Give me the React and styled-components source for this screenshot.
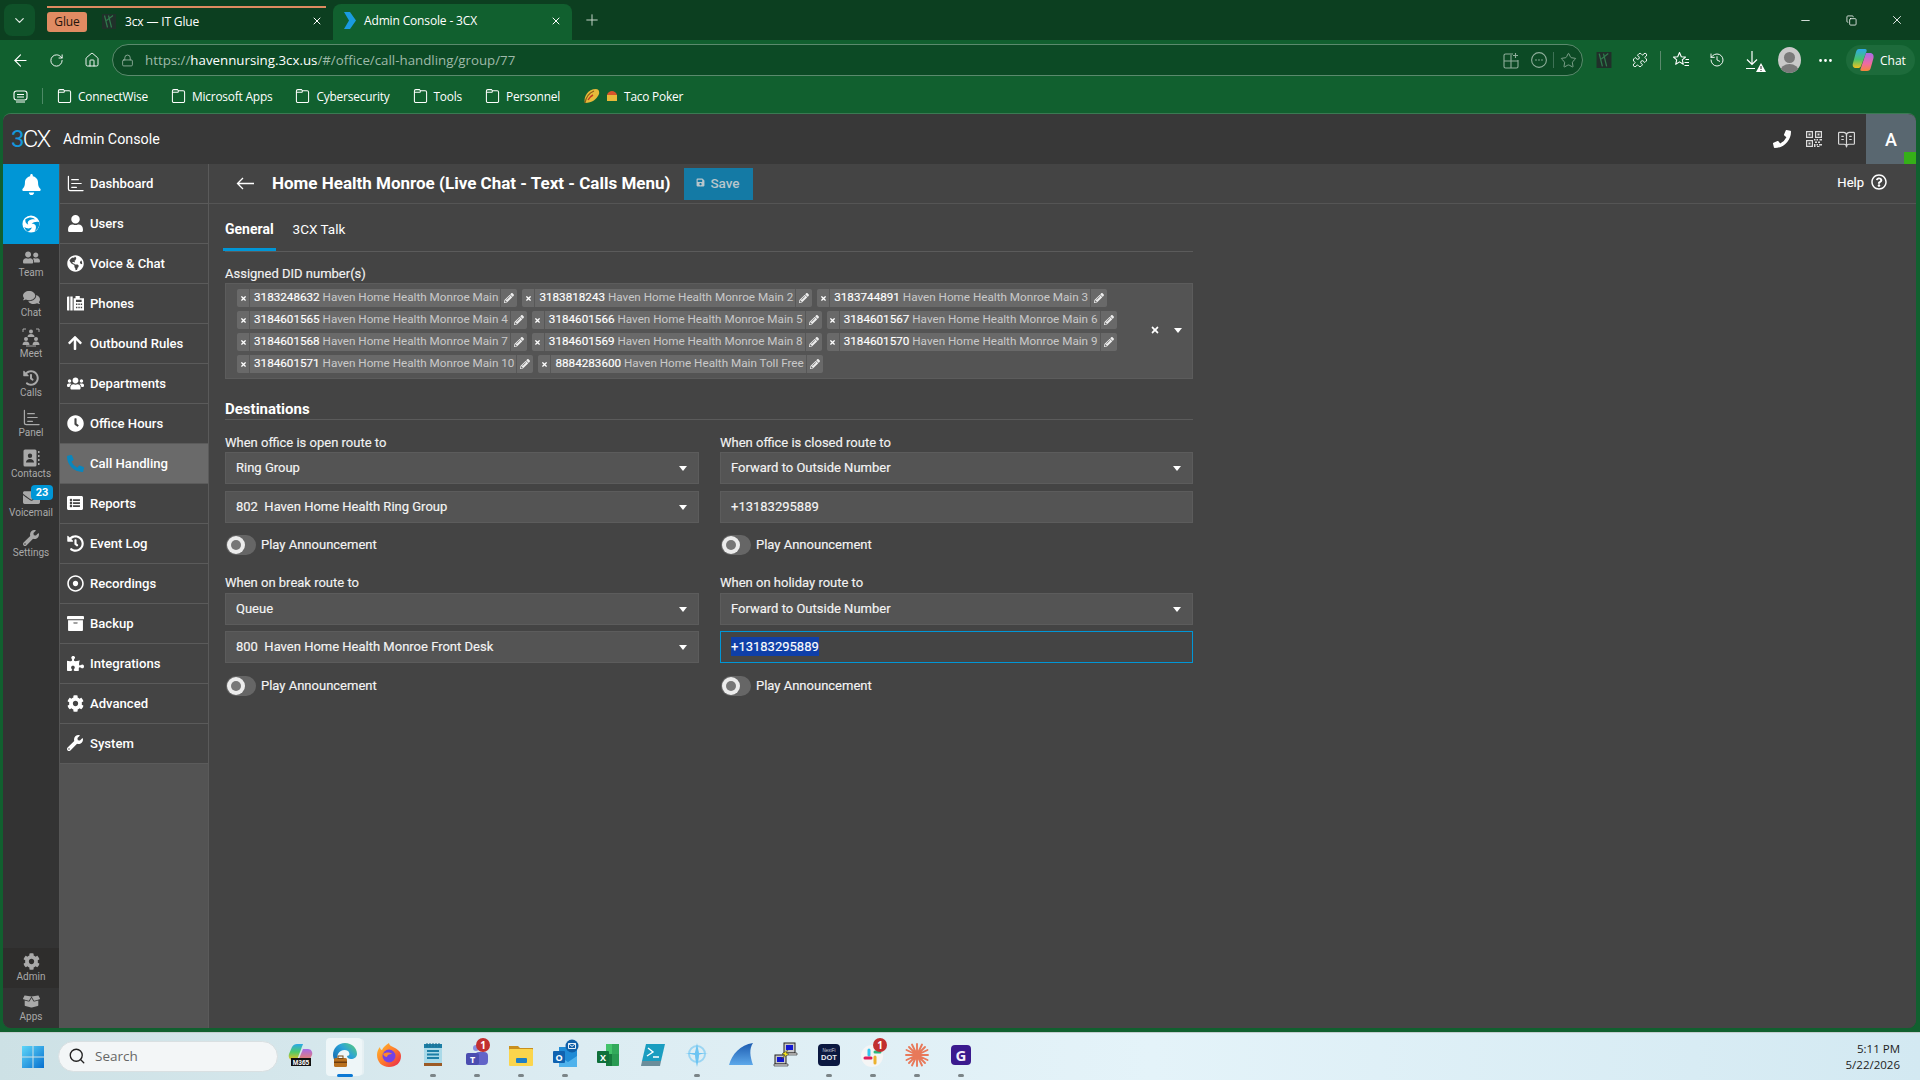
import React from "react";
import styled, { createGlobalStyle } from "styled-components";
import { RotateCw, House, Lock, Star, Puzzle, History, Ellipsis, Minus, X, Plus, ChevronDown, Search, Copy, BookOpenText, ArrowLeft } from "lucide-react";
import { FaUser, FaGlobeAmericas, FaArrowUp, FaUsers, FaClock, FaPhoneAlt, FaListAlt, FaHistory, FaRegDotCircle, FaArchive, FaPuzzlePiece, FaCog, FaWrench, FaUserFriends, FaComments, FaEnvelope, FaBoxOpen, FaBell, FaPencilAlt, FaTimes, FaSave, FaRegQuestionCircle } from "react-icons/fa";

const Global = createGlobalStyle`
  html, body { margin: 0; padding: 0; height: 100%; overflow: hidden; background: #11602f; }
  * { box-sizing: border-box; }
  #root { height: 100%; }
`;

const Page = styled.div`
  width: 1920px; height: 1080px; display: flex; flex-direction: column; overflow: hidden;
  background: #11602f; font-family: Roboto, "Liberation Sans", sans-serif;
`;

/* ---------- browser chrome ---------- */
const TabStrip = styled.div`
  height: 40px; flex: none; display: flex; background: #0c3f20; color: #fff;
  font-family: "Open Sans", "Noto Sans", sans-serif; font-size: 12px;
`;
const TabListButton = styled.div`
  width: 31px; height: 32px; margin: 4px 0 0 4px; border-radius: 8px; background: #0f5229;
  display: flex; align-items: center; justify-content: center; color: #dfe9e2;
`;
const InactiveTab = styled.div`
  width: 279px; height: 28px; margin: 6px 0 0 12px; border-top: 2px solid #dd8a60;
  display: flex; align-items: center; letter-spacing: -0.1px;
`;
const GroupLabel = styled.span`
  width: 40px; height: 20px; margin-top: 2px; border-radius: 3px; background: #e08b62; color: #23150c;
  display: flex; align-items: center; justify-content: center; font-size: 12px; flex: none; padding-bottom: 1px;
`;
const TabFavicon = styled.svg`
  width: 14px; height: 15px; margin-left: 15px; flex: none;
`;
const TabTitle = styled.span`
  margin-left: ${p => p.$gap}px; flex: 1; white-space: nowrap; letter-spacing: -0.15px;
`;
const TabClose = styled.span`
  display: flex; width: 12px; margin-right: ${p => p.$right}px; flex: none; color: #fff;
`;
const ActiveTab = styled.div`
  width: 239px; height: 36px; margin: 4px 0 0 7px; padding: 0 0 3px 11px; border-radius: 8px 8px 0 0;
  background: #11602f; display: flex; align-items: center;
`;
const NewTab = styled.div`
  width: 18px; margin-left: 11px; display: flex; align-items: center; justify-content: center; color: #c8d8cd;
`;
const WindowControls = styled.div`
  margin-left: auto; display: flex;
`;
const WindowControl = styled.div`
  width: 46px; height: 40px; display: flex; align-items: center; justify-content: center; color: #fff;
`;

const Toolbar = styled.div`
  height: 40px; flex: none; display: flex; align-items: center; padding-left: 2px; background: #11602f; color: #fff;
`;
const ToolButton = styled.div`
  width: 36px; height: 32px; flex: none; display: flex; align-items: center; justify-content: center;
  color: ${p => p.$dim ? "#c4d6ca" : "#fff"}; position: relative;
`;
const AddressBar = styled.div`
  flex: 1; height: 32px; margin: 0 3px 0 2px; display: flex; align-items: center; padding-left: 8px;
  border: 1px solid #5b8a6d; border-radius: 16px; background: #0c4a25;
  font-family: "Open Sans", "Noto Sans", sans-serif; font-size: 13.3px; color: #9fb9a9;
`;
const AddressIcon = styled.span`
  display: flex; width: 14px; margin-right: 10px; color: #9fb9a9;
`;
const Domain = styled.span`
  color: #fff;
`;
const AddressTools = styled.div`
  margin-left: auto; display: flex; align-items: center; color: #8fae9b;
`;
const AddressTool = styled.div`
  width: 28px; display: flex; align-items: center; justify-content: center;
`;
const ThinSep = styled.div`
  width: 1px; height: ${p => p.$h}px; margin: 0 ${p => p.$m}px; background: ${p => p.$c}; flex: none;
`;
const ToolGroup = styled.div`
  flex: none; display: flex; align-items: center; padding-right: 5px;
`;
const Avatar = styled.div`
  width: 23px; height: 26px; border-radius: 50%; background: #c9c9c9; overflow: hidden; position: relative;
  &::before { content: ""; position: absolute; left: 6px; top: 5px; width: 11px; height: 11px; border-radius: 50%; background: #7a7a7a; }
  &::after { content: ""; position: absolute; left: 2px; top: 17px; width: 19px; height: 16px; border-radius: 50%; background: #7a7a7a; }
`;
const ChatPill = styled.div`
  width: 69px; height: 30px; margin-left: 3px; border-radius: 15px; background: #1d6b3b; display: flex; align-items: center;
  padding-left: 6px; gap: 6px; font-family: "Open Sans", sans-serif; font-size: 12px; color: #fff;
`;
const Warn = styled.svg`
  position: absolute; right: 5px; bottom: 4px;
`;

const BookmarksBar = styled.div`
  height: 33px; flex: none; display: flex; align-items: center; padding-left: 13px; background: #11602f; color: #fff;
  font-family: "Open Sans", "Noto Sans", sans-serif; font-size: 11.9px; letter-spacing: -0.2px; padding-bottom: 1px;
`;
const Bookmark = styled.div`
  display: flex; align-items: center; gap: 6px; margin-right: 23px; white-space: nowrap;
`;

/* ---------- admin console window ---------- */
const AppWindow = styled.div`
  flex: 1; min-height: 0; margin: 0 4px 4px 3px; display: flex; flex-direction: column;
  border-radius: 8px; overflow: hidden; background: #444; border-top: 1px solid #3a7a52;
`;
const TopBar = styled.div`
  height: 50px; flex: none; display: flex; align-items: center; background: #383838; color: #fff; padding-left: 8px;
`;
const LogoMark = styled.div`
  font-size: 24px; font-weight: 300; letter-spacing: -1.8px; line-height: 1; width: 52px; color: #fff;
  span { color: #1497dc; font-weight: 400; }
`;
const AppName = styled.div`
  font-size: 14.3px;
`;
const TopIcons = styled.div`
  margin-left: auto; display: flex; align-items: center; height: 100%;
`;
const TopIcon = styled.div`
  width: 32px; display: flex; justify-content: center; color: ${p => p.$c || "#d8d8d8"};
`;
const UserBlock = styled.div`
  width: 50px; height: 100%; margin-left: 4px; background: #596770; color: #fff; font-size: 18px; font-weight: 500;
  display: flex; align-items: center; justify-content: center; position: relative;
`;
const Presence = styled.div`
  position: absolute; right: 0; bottom: 0; width: 12px; height: 12px; background: #35b018;
`;
const Body = styled.div`
  flex: 1; min-height: 0; display: flex;
`;
const Rail = styled.div`
  width: 57px; flex: none; display: flex; flex-direction: column; background: #333; border-right: 1px solid #555;
`;
const RailHot = styled.div`
  height: 80px; background: #0096d6; display: flex; flex-direction: column; color: #fff;
`;
const RailHotItem = styled.div`
  height: 40px; display: flex; align-items: center; justify-content: center;
`;
const RailItem = styled.div`
  height: 40px; flex: none; position: relative; display: flex; flex-direction: column; align-items: center; justify-content: center;
  color: #a9a9a9; font-size: 10px; line-height: 12px; gap: 1px; background: ${p => p.$active ? "#2e2d2c" : "transparent"};
  svg { display: block; }
`;
const RailBadge = styled.div`
  position: absolute; left: 28px; top: 1px; width: 22px; height: 15px; border-radius: 4px; background: #0096d6; color: #fff;
  font-size: 11px; font-weight: 700; display: flex; align-items: center; justify-content: center;
`;
const RailSpacer = styled.div`
  flex: 1;
`;
const NavColumn = styled.div`
  width: 149px; flex: none; background: #535353; border-right: 1px solid #5a5a5a;
`;
const NavRow = styled.div`
  height: 40px; display: flex; align-items: center; padding: 0 0 1px 7px; background: ${p => p.$active ? "#6a6a6a" : "#444"};
  border-bottom: 1px solid #5b5b5b; color: #fff; font-size: 13.1px; font-weight: 500; white-space: nowrap;
`;
const NavIcon = styled.span`
  width: 23px; flex: none; display: flex; color: ${p => p.$c || "#fff"};
`;
const Main = styled.div`
  flex: 1; min-width: 0; color: #fff; background: #444;
`;
const TitleRow = styled.div`
  height: 40px; display: flex; align-items: center; padding: 0 29px 0 27px; border-bottom: 1px solid #555;
`;
const BackArrow = styled.div`
  display: flex; width: 36px; color: #fff;
`;
const Title = styled.h1`
  margin: 0; font-size: 17px; font-weight: 700; white-space: nowrap; padding-bottom: 1px;
`;
const SaveButton = styled.div`
  width: 69px; height: 32px; margin-left: 13px; background: #147aa5; color: #b9c6cc; display: flex; align-items: center;
  justify-content: center; gap: 5px; font-size: 13.5px; font-weight: 500; padding-bottom: 2px;
`;
const Help = styled.div`
  margin-left: auto; display: flex; align-items: center; gap: 7px; font-size: 13px; font-weight: 400; -webkit-text-stroke: .15px #fff; padding-bottom: 3px;
`;
const Form = styled.div`
  width: 968px; margin: 14px 0 0 16px;
`;
const Tabs = styled.div`
  height: 34px; display: flex; border-bottom: 1px solid #5b5b5b;
`;
const FormTab = styled.div`
  height: 33px; padding: 0 ${p => p.$active ? "2px" : "0"}; margin-left: ${p => p.$active ? "-2px" : "17px"}; line-height: 22px;
  font-size: ${p => p.$active ? 14 : 13.5}px; font-weight: ${p => p.$active ? 700 : 400};
  border-bottom: 3px solid ${p => p.$active ? "#0096d6" : "transparent"};
`;
const FieldLabel = styled.div`
  height: 16px; line-height: 18px; font-size: 13px; -webkit-text-stroke: .15px #f2f2f2; margin-bottom: ${p => p.$mb ?? 2}px; white-space: nowrap; color: #f2f2f2;
`;
const DidLabel = styled(FieldLabel)`
  margin-top: 13px;
`;
const DidBox = styled.div`
  height: 96px; padding: 5px 0 5px 11px; background: #545454; border: 1px solid #5c5c5c; display: flex; align-items: flex-start;
`;
const ChipList = styled.div`
  width: 908px; display: flex; flex-wrap: wrap; gap: 4px 5px;
`;
const Chip = styled.div`
  height: 18px; display: flex; align-items: center; background: #696969; font-size: 11.7px; line-height: 16px; color: #c9c9c9; white-space: nowrap; border-radius: 2px;
`;
const ChipRemove = styled.span`
  width: 13px; height: 100%; display: flex; align-items: center; justify-content: center; border-right: 1px solid #585858; color: #fff;
`;
const ChipText = styled.span`
  padding: 0 2px 2px 4px;
  b { font-weight: 400; color: #fff; -webkit-text-stroke: .15px #fff; }
`;
const ChipEdit = styled.span`
  width: 17px; height: 100%; display: flex; align-items: center; justify-content: center; border-left: 1px solid #585858; color: #eee;
`;
const DidActions = styled.div`
  flex: 1; align-self: center; display: flex; align-items: center; gap: 14px; padding: 0 0 2px 5px; color: #fff;
`;
const Caret = styled.span`
  width: 0; height: 0; border-left: 4.5px solid transparent; border-right: 4.5px solid transparent; border-top: 5.5px solid #fff; flex: none;
`;
const SectionTitle = styled.div`
  margin-top: 22px; height: 19px; padding-bottom: 3px; line-height: 16px; font-size: 15px; font-weight: 700; border-bottom: 1px solid #5b5b5b;
`;
const RouteGrid = styled.div`
  margin-top: 14px; display: grid; grid-template-columns: 474px 473px; column-gap: 21px; row-gap: 19px;
`;
const RouteGroup = styled.div`
  display: flex; flex-direction: column;
`;
const FieldStack = styled.div`
  display: flex; flex-direction: column; gap: ${p => p.$gap}px;
`;
const Select = styled.div`
  height: 32px; padding: 0 11px 0 10px; display: flex; align-items: center; justify-content: space-between;
  background: #545454; border: 1px solid #5c5c5c; font-size: 13px; -webkit-text-stroke: .15px #f4f4f4; color: #f4f4f4; white-space: pre;
  span:first-child { padding-bottom: 2px; }
`;
const TextInput = styled.div`
  height: 32px; padding: 0 10px 1px; display: flex; align-items: center; font-size: 13px; -webkit-text-stroke: .15px #f4f4f4; color: #f4f4f4;
  background: ${p => p.$focus ? "#444" : "#545454"}; border: 1px solid ${p => p.$focus ? "#0096d6" : "#5c5c5c"};
`;
const Selected = styled.span`
  background: #0f3fa8; color: #fff; line-height: 19px;
`;
const ToggleRow = styled.div`
  margin-top: ${p => p.$mt}px; height: 20px; display: flex; align-items: center; font-size: 13px; -webkit-text-stroke: .15px #f4f4f4; gap: 5px; color: #f4f4f4;
  span { padding-bottom: 1px; }
`;
const Toggle = styled.div`
  width: 30px; height: 20px; border-radius: 10px; background: #666; position: relative; margin-left: 1px;
  &::before { content: ""; position: absolute; left: 1px; top: 1px; width: 18px; height: 18px; border-radius: 50%; background: #ececec; }
  &::after { content: ""; position: absolute; left: 5px; top: 5px; width: 10px; height: 10px; border-radius: 50%; background: #777; }
`;

/* ---------- windows taskbar ---------- */
const Taskbar = styled.div`
  height: 48px; flex: none; display: flex; align-items: center; border-top: 1px solid #c4cdd0;
  background: linear-gradient(90deg, #cde1e5 0%, #dcecf2 30%, #e4f3f9 60%, #d3e9f2 100%);
`;
const StartSlot = styled.div`
  width: 58px; flex: none; padding-left: 21px; display: flex;
`;
const SearchPill = styled.div`
  width: 220px; height: 31px; flex: none; margin-right: 1px; border-radius: 16px; background: #f3f6f7; border: 1px solid #d9e0e2; display: flex; align-items: center;
  padding: 0 0 1px 9px; gap: 9px; color: #666; font-family: "Open Sans", sans-serif; font-size: 13.5px;
`;
const TaskSlot = styled.div`
  width: 44px; height: 47px; flex: none; display: flex; align-items: center; justify-content: center; position: relative;
`;
const ActiveBack = styled.div`
  position: absolute; left: 3px; top: 5px; width: 36px; height: 38px; border-radius: 4px; background: #eef6f8; box-shadow: 3px 0 0 -1px #e6f0f3;
`;
const RunDot = styled.div`
  position: absolute; left: 19px; bottom: 3px; width: 6px; height: 3px; border-radius: 2px; background: ${p => p.$active ? "#0a78d4" : "#7b8487"};
  ${p => p.$active && "width: 16px; left: 14px;"}
`;
const TaskGlyph = styled.svg`
  width: 26px; height: 26px; position: relative; display: block; overflow: visible; margin-top: -3px;
`;
const Clock = styled.div`
  margin-left: auto; padding-right: 20px; text-align: right; font-family: "Open Sans", sans-serif; font-size: 11.5px; line-height: 16px; color: #222;
`;

/* ---------- custom drawings ---------- */
const PanelGlyph = ({ size = 17, c = "currentColor" }) => (
  <svg width={size} height={size} viewBox="0 0 18 18" fill="none" stroke={c} strokeWidth="1.3" strokeLinecap="round">
    <path d="M1.5 1.5V14.5a2 2 0 0 0 2 2H17" /><path d="M5 5h7M5 9h10M5 13h5" />
  </svg>
);
const PhonesGlyph = () => (
  <svg width="17" height="17" viewBox="0 0 18 18" fill="#fff">
    <path d="M0 2.5a1 1 0 0 1 1-1h1.5v15H1a1 1 0 0 1-1-1zM3.5 1.5H6v15H3.5z" />
    <path fillRule="evenodd" d="M7 3.5h2V1h4.5v2.5H18V16.5H7zM9.5 7.5H15.5V5H9.5zM9.5 10.5H11V9H9.5zM12 10.5h1.5V9H12zM14.5 10.5H16V9h-1.5zM9.5 14H11v-1.5H9.5zM12 14h1.5v-1.5H12zM14.5 14H16v-1.5h-1.5z" />
  </svg>
);
const SwirlGlyph = () => (
  <svg width="18" height="18" viewBox="0 0 20 20">
    <circle cx="10" cy="10" r="9.5" fill="#fff" />
    <path d="M4 4.500c4-2.500 8-2.500 11 .5-3-.5-6 0-8 2-.8 1-.8 2.500 0 3.500-2.500-.5-4-3.500-3-6zM19 8c1 3.500-1 8-5 10 1.500-2 2-4.500 1-6.500-1-1.500-3-2-4.500-1.500 2-2 6-3 8.500-2zM2.500 13c2 2 5.500 2.500 8.500 1-1 2.500-3 4.500-5 4.500-1.500-1.500-3-3.500-3.500-5.500z" fill="#0096d6" />
  </svg>
);
const MeetGlyph = () => (
  <svg width="18" height="19" viewBox="0 0 18 19" fill="#a9a9a9">
    <path d="M4 1H1v3M14 1h3v3" fill="none" stroke="#a9a9a9" strokeWidth="1" />
    <circle cx="9" cy="3.5" r="2" /><path d="M5.500 9c0-2 1.500-3 3.500-3s3.500 1 3.500 3z" />
    <circle cx="4" cy="11" r="2" /><path d="M.5 17c0-2.500 1.500-3.500 3.500-3.500S7.500 14.500 7.500 17z" />
    <circle cx="14" cy="11" r="2" /><path d="M10.500 17c0-2.500 1.500-3.500 3.500-3.500s3.500 1 3.500 3.500z" />
    <path d="M4 18h10" stroke="#a9a9a9" strokeWidth="1" />
  </svg>
);
const ContactsGlyph = () => (
  <svg width="17" height="18" viewBox="0 0 17 18" fill="#a9a9a9">
    <path fillRule="evenodd" d="M2 0.500h10a1.500 1.500 0 0 1 1.500 1.500v14a1.500 1.500 0 0 1-1.500 1.500H2A1.500 1.500 0 0 1 .5 16V2A1.500 1.500 0 0 1 2 .5zM7 4.500a2.200 2.200 0 1 0 0 4.400 2.200 2.200 0 0 0 0-4.400zM3 13.500h8c0-2.200-1.700-3.500-4-3.500s-4 1.300-4 3.500z" />
    <path d="M15 2h1.500v2H15zM15 6h1.500v2H15zM15 10h1.500v2H15zM15 14h1.500v2H15z" />
  </svg>
);
const QrGlyph = () => (
  <svg width="16" height="16" viewBox="0 0 16 16" fill="#ddd">
    <path fillRule="evenodd" d="M0 0h7v7H0zM1.200 1.200v4.600h4.600V1.200zM9 0h7v7H9zM10.200 1.200v4.600h4.600V1.200zM0 9h7v7H0zM1.200 10.200v4.600h4.600v-4.600z" />
    <path d="M2.500 2.500h2v2h-2zM11.500 2.500h2v2h-2zM2.500 11.500h2v2h-2zM8 8h1.500v1.500H8zM10.500 8H12v1.500h-1.500zM13.500 8H16v1.500h-2.500zM9 10.500h2V12H9zM12 10.500h2V12h-2zM8 13h1.500v3H8zM10.500 13H12v1.500h-1.500zM13 13h3v1.500h-3zM11 15h2.500v1H11z" />
  </svg>
);
const BackGlyph = () => (
  <svg width="18" height="13" viewBox="0 0 18 13" fill="none" stroke="#fff" strokeWidth="1.300"><path d="M18 6.500H1.500M7 1L1.500 6.500 7 12" /></svg>
);
const Folder = () => (
  <svg width="15" height="16" viewBox="0 0 16 17" fill="none" stroke="#fff" strokeWidth="1.100">
    <path d="M1.500 4V14a1.500 1.500 0 0 0 1.500 1.500h10a1.500 1.500 0 0 0 1.500-1.500V4.500A1.500 1.500 0 0 0 13 3H8L6.800 1.700H3A1.500 1.500 0 0 0 1.500 3.200zM1.500 4.500H7.500L8 3" />
  </svg>
);
const TacoGlyph = () => (
  <svg width="17" height="17" viewBox="0 0 17 17">
    <path d="M2 15C0 9 5 1 13 1c3 0 3.500 3 3 5-2 5-7 9-14 9z" fill="#e8b93a" />
    <path d="M2 15c1-6 4-10 9-12" stroke="#8a5b16" fill="none" strokeWidth="1.2" />
    <path d="M5 12c1-2 3-4 5-5" stroke="#c23b22" fill="none" strokeWidth="1.400" />
  </svg>
);
const SmallFood = () => (
  <svg width="12" height="12" viewBox="0 0 12 12">
    <path d="M1 5h10v6H1z" fill="#e8b93a" /><path d="M1 5c1-3 3-4 5-4s4 1 5 4z" fill="#d9542b" />
  </svg>
);
const ChatGlyph = () => (
  <svg width="22" height="24" viewBox="0 0 22 24">
    <defs>
      <linearGradient id="cp1" x1=".5" y1="0" x2=".5" y2="1"><stop offset="0" stopColor="#2fa8e8" /><stop offset=".55" stopColor="#46c46c" /><stop offset="1" stopColor="#f2c01f" /></linearGradient>
      <linearGradient id="cp2" x1=".5" y1="0" x2=".5" y2="1"><stop offset="0" stopColor="#a86ce8" /><stop offset=".6" stopColor="#f06aa0" /><stop offset="1" stopColor="#f5873a" /></linearGradient>
    </defs>
    <path d="M7 1h6c1.500 0 2 1 1.500 2.500L9 18c-.6 1.400-1.500 2-3 2H4c-2.500 0-4-2-3-5L4 4c.6-2 1.500-3 3-3z" fill="url(#cp1)" />
    <path d="M14 5h4c3 0 4 2.500 3.500 5l-2.500 9c-.6 3-2 4-4 4h-5c-1.500 0-2-1-1.500-2z" fill="url(#cp2)" />
  </svg>
);
const FavoritesGlyph = () => (
  <svg width="18" height="18" viewBox="0 0 18 18" fill="none" stroke="#fff" strokeWidth="1.100" strokeLinejoin="round">
    <path d="M7.500 1.500l1.800 4.200 4.200.4-3.200 2.800 1 4.400-3.800-2.400-3.800 2.400 1-4.400L1.500 6.100l4.200-.4z" />
    <path d="M13.500 8.500h3.500M12.500 11.500h4.500M12.500 14.500h4.500" />
  </svg>
);
const DownloadGlyph = () => (
  <>
    <svg width="18" height="20" viewBox="0 0 18 20" fill="none" stroke="#fff" strokeWidth="1.200"><path d="M8 1v13M3 9.500l5 5 5-5M2 18.500h9" /></svg>
    <Warn width="10" height="9" viewBox="0 0 10 9"><path d="M5 0l5 9H0z" fill="#fff" /><path d="M5 3v3M5 7v1" stroke="#222" /></Warn>
  </>
);
const SplitGlyph = () => (
  <svg width="16" height="17" viewBox="0 0 16 17" fill="none" stroke="#8fae9b" strokeWidth="1.100"><path d="M10 2H2.500A1.500 1.500 0 0 0 1 3.500v11A1.500 1.500 0 0 0 2.500 16h11a1.500 1.500 0 0 0 1.500-1.500V8M1 9h14M8 3v13M12.500 1v5M10 3.500h5" /></svg>
);
const DotsCircle = () => (
  <svg width="16" height="16" viewBox="0 0 16 16" fill="none" stroke="#8fae9b" strokeWidth="1.100"><circle cx="8" cy="8" r="7.400" /><path d="M5 8h.01M8 8h.01M11 8h.01" strokeWidth="1.600" strokeLinecap="round" /></svg>
);
const GlueLogo = () => (
  <>
    <rect width="14" height="15" fill="#20302a" />
    <path d="M2.500 1.500l3 12M6.500 1.500l3 12M11 1.500l-6.500 5" stroke="#2f7a4c" strokeWidth="1.200" fill="none" />
  </>
);
const WinLogo = () => (
  <svg width="24" height="24" viewBox="0 0 24 24">
    <defs><linearGradient id="win" x1="0" y1="0" x2="1" y2="1"><stop offset="0" stopColor="#5fd6f8" /><stop offset="1" stopColor="#0670d0" /></linearGradient></defs>
    <path d="M1 1h10.500v10.500H1zM12.500 1H23v10.500H12.500zM1 12.500h10.500V23H1zM12.500 12.500H23V23H12.500z" fill="url(#win)" />
  </svg>
);
const Badge = ({ x = 18, y = 4 }) => (
  <g>
    <circle cx={x} cy={y} r="7" fill="#c22f2f" />
    <text x={x} y={y + 3.500} textAnchor="middle" fontSize="10" fontWeight="700" fontFamily="Open Sans, sans-serif" fill="#fff">1</text>
  </g>
);

const TaskIcons = {
  m365: () => (
    <TaskGlyph viewBox="0 0 26 26">
      <defs><linearGradient id="m1" x1=".5" y1="0" x2=".5" y2="1"><stop offset="0" stopColor="#29a8e8" /><stop offset=".5" stopColor="#4fca6a" /><stop offset="1" stopColor="#f1c21c" /></linearGradient>
      <linearGradient id="m2" x1=".5" y1="0" x2=".5" y2="1"><stop offset="0" stopColor="#a86be8" /><stop offset="1" stopColor="#f2825d" /></linearGradient></defs>
      <path d="M9 2h6L9 18H5c-3 0-5-2-4-6l3-7c1-2 3-3 5-3z" fill="url(#m1)" /><path d="M15 7h5c3 0 5 3 4 6l-3 6H10z" fill="url(#m2)" />
      <rect x="3" y="16" width="20" height="8" fill="#111" />
      <text x="13" y="22.500" textAnchor="middle" fontSize="6.600" fontWeight="700" fontFamily="Liberation Sans, sans-serif" fill="#fff">M365</text>
    </TaskGlyph>
  ),
  edge: () => (
    <TaskGlyph viewBox="0 0 26 26">
      <defs><linearGradient id="e1" x1="0" y1="1" x2="1" y2="0"><stop offset="0" stopColor="#0c59a4" /><stop offset=".6" stopColor="#2ba3d8" /><stop offset="1" stopColor="#5fd16e" /></linearGradient></defs>
      <path d="M13 1c7 0 12 5 12 11 0 3-3 5-6 5-2 0-4-1-4-3 3 0 3-3 1-5-3-2-8-1-10 3-2 5 0 10 5 12C5 23 1 18 1 13 1 6 6 1 13 1z" fill="url(#e1)" />
      <rect x="2" y="16" width="13" height="9" rx="1.500" fill="#b8701f" /><rect x="2" y="19.500" width="13" height="1.500" fill="#6d3d0f" /><rect x="6" y="14" width="5" height="2.500" fill="none" stroke="#7a4a15" />
    </TaskGlyph>
  ),
  firefox: () => (
    <TaskGlyph viewBox="0 0 26 26">
      <defs><linearGradient id="f1" x1="0" y1="0" x2="1" y2="1"><stop offset="0" stopColor="#ffc02e" /><stop offset=".5" stopColor="#ff7b2b" /><stop offset="1" stopColor="#e8204f" /></linearGradient></defs>
      <path d="M13 25C6 25 1 20 1 13c0-3 1-6 3-8 0 2 1 3 2 3 1-3 4-5 7-7 0 2 2 3 4 4 4 2 8 4 8 9 0 7-5 11-12 11z" fill="url(#f1)" />
      <circle cx="13" cy="14" r="6.500" fill="#7542e5" /><path d="M7 12c3-2 7-2 9 0-3 0-5 1-5 3-2 0-3-1-4-3z" fill="#ff8a2b" />
    </TaskGlyph>
  ),
  notepad: () => (
    <TaskGlyph viewBox="0 0 26 26">
      <rect x="4" y="2" width="18" height="19" fill="#a9d9e8" /><rect x="4" y="2" width="18" height="4" fill="#1d7fa6" />
      <path d="M7 1v4M10 1v4M13 1v4M16 1v4M19 1v4" stroke="#1a6e90" strokeWidth="1" />
      <path d="M7 9h12M7 12.500h12M7 16h12" stroke="#1d7fa6" strokeWidth="2" />
      <rect x="4" y="21" width="18" height="3" fill="#9b5a25" />
    </TaskGlyph>
  ),
  teams: () => (
    <TaskGlyph viewBox="0 0 26 26">
      <circle cx="12" cy="6" r="3" fill="#8a8fe0" /><rect x="11" y="10" width="13" height="13" rx="4" fill="#6264c8" />
      <rect x="2" y="11" width="13" height="12" rx="2" fill="#4b4db0" />
      <text x="8.500" y="20.500" textAnchor="middle" fontSize="9" fontWeight="700" fontFamily="Open Sans, sans-serif" fill="#fff">T</text>
      <Badge x={19} y={3} />
    </TaskGlyph>
  ),
  explorer: () => (
    <TaskGlyph viewBox="0 0 26 26">
      <path d="M1 4h9l2 2h13v3H1z" fill="#c98f1e" /><rect x="1" y="7" width="24" height="17" rx="1" fill="#fbd54c" />
      <rect x="8" y="16" width="11" height="5" rx="1" fill="#1f7fc4" />
    </TaskGlyph>
  ),
  outlook: () => (
    <TaskGlyph viewBox="0 0 26 26">
      <rect x="7" y="5" width="18" height="20" fill="#1f8bd6" /><path d="M7 14l9 6 9-6v11H7z" fill="#4fb2ec" />
      <rect x="1" y="9" width="12" height="12" rx="1" fill="#0f62b0" />
      <text x="7" y="18.500" textAnchor="middle" fontSize="9" fontWeight="700" fontFamily="Open Sans, sans-serif" fill="#fff">O</text>
      <circle cx="20" cy="4" r="6.500" fill="#0f5fa8" /><path d="M16.500 1.500h7v5h-7zM16.500 1.500l3.500 3 3.500-3" fill="none" stroke="#fff" strokeWidth=".9" />
    </TaskGlyph>
  ),
  excel: () => (
    <TaskGlyph viewBox="0 0 26 26">
      <path d="M10 2h13v10H10z" fill="#43c36a" /><path d="M10 12h13v10a2 2 0 0 1-2 2H10z" fill="#177a3e" /><path d="M16 2h7v22h-7z" fill="#2ea257" opacity=".8" />
      <rect x="1" y="9" width="12" height="12" rx="1" fill="#10703a" />
      <text x="7" y="18.500" textAnchor="middle" fontSize="9" fontWeight="700" fontFamily="Open Sans, sans-serif" fill="#fff">X</text>
    </TaskGlyph>
  ),
  terminal: () => (
    <TaskGlyph viewBox="0 0 26 26">
      <path d="M6 2h19l-4 17H2z" fill="#1a9dc0" /><path d="M2 19h19l-1 5H1z" fill="#6b8d9a" />
      <path d="M8 6l5 4-6 4M13 15h6" stroke="#fff" strokeWidth="1.400" fill="none" />
    </TaskGlyph>
  ),
  compass: () => (
    <TaskGlyph viewBox="0 0 26 26" fill="#6cc4f2">
      <path d="M13 1c1 6 2 9 2 10h9.500c-6 1-9.500 1-9.500 2 0 3-1 7-2 12-1-5-2-9-2-12-3-1-6-1-10-2h10C11 10 12 7 13 1z" />
      <circle cx="13" cy="12" r="8" fill="none" stroke="#6cc4f2" strokeWidth="2" opacity=".6" />
    </TaskGlyph>
  ),
  fin: () => (
    <TaskGlyph viewBox="0 0 26 26">
      <defs><linearGradient id="fin" x1="0" y1="0" x2="0" y2="1"><stop offset="0" stopColor="#1c5bb0" /><stop offset="1" stopColor="#5da8ea" /></linearGradient></defs>
      <path d="M1 23C4 12 12 3 25 1c-4 6-3 13 0 22z" fill="url(#fin)" />
    </TaskGlyph>
  ),
  putty: () => (
    <TaskGlyph viewBox="0 0 26 26">
      <rect x="12" y="1" width="11" height="10" fill="#c8c8c8" stroke="#222" /><rect x="14" y="3" width="7" height="5" fill="#1218d0" /><path d="M11 11h14v2H11z" fill="#ddd" stroke="#222" strokeWidth=".6" />
      <rect x="3" y="13" width="11" height="9" fill="#c8c8c8" stroke="#222" /><rect x="5" y="15" width="7" height="5" fill="#1218d0" /><path d="M2 22h14v2H2z" fill="#ddd" stroke="#222" strokeWidth=".6" />
      <path d="M16 8l-6 4 3 1-4 4 8-5-3-1z" fill="#f3e21f" stroke="#222" strokeWidth=".4" />
    </TaskGlyph>
  ),
  dot: () => (
    <TaskGlyph viewBox="0 0 26 26">
      <rect x="2" y="2" width="22" height="22" rx="4" fill="#0b1840" />
      <text x="13" y="9.500" textAnchor="middle" fontSize="4.500" fontFamily="Liberation Sans, sans-serif" fill="#c7ccd8">NextFi</text>
      <text x="13" y="18" textAnchor="middle" fontSize="7.500" fontWeight="700" fontFamily="Liberation Sans, sans-serif" fill="#e6e9f0">DOT</text>
    </TaskGlyph>
  ),
  slack: () => (
    <TaskGlyph viewBox="0 0 26 26">
      <circle cx="12" cy="14" r="11" fill="#f5f5f5" />
      <path d="M9 8v5" stroke="#36c5f0" strokeWidth="3" strokeLinecap="round" /><path d="M15 10h5" stroke="#2eb67d" strokeWidth="3" strokeLinecap="round" />
      <path d="M5 16h6" stroke="#e01e5a" strokeWidth="3" strokeLinecap="round" /><path d="M15 15v6" stroke="#ecb22e" strokeWidth="3" strokeLinecap="round" />
      <Badge x={20} y={3} />
    </TaskGlyph>
  ),
  burst: () => (
    <TaskGlyph viewBox="0 0 26 26" stroke="#e8795a" strokeWidth="1.900" strokeLinecap="round">
      <path d="M13 2v22M2 13h22M5 5l16 16M21 5L5 21M8 2.500l10 21M18 2.500l-10 21M2.500 8l21 10M2.500 18l21-10" />
    </TaskGlyph>
  ),
  glyphG: () => (
    <TaskGlyph viewBox="0 0 26 26">
      <rect x="3" y="3" width="20" height="20" rx="4" fill="#3b1a8e" />
      <text x="13" y="18.500" textAnchor="middle" fontSize="15" fontWeight="700" fontFamily="Open Sans, sans-serif" fill="#f2eefc">G</text>
    </TaskGlyph>
  ),
};

const taskbarItems = [
  { k: "m365" }, { k: "edge", active: true }, { k: "firefox" }, { k: "notepad", run: true }, { k: "teams", run: true },
  { k: "explorer", run: true }, { k: "outlook", run: true }, { k: "excel" }, { k: "terminal" }, { k: "compass", run: true },
  { k: "fin" }, { k: "putty" }, { k: "dot", run: true }, { k: "slack", run: true }, { k: "burst", run: true }, { k: "glyphG", run: true },
];

const navItems = [
  { t: "Dashboard", i: <PanelGlyph /> }, { t: "Users", i: <FaUser size={17} /> }, { t: "Voice & Chat", i: <FaGlobeAmericas size={17} /> },
  { t: "Phones", i: <PhonesGlyph /> }, { t: "Outbound Rules", i: <FaArrowUp size={16} /> }, { t: "Departments", i: <FaUsers size={17} /> },
  { t: "Office Hours", i: <FaClock size={17} /> }, { t: "Call Handling", i: <FaPhoneAlt size={17} />, c: "#0a86bd", active: true },
  { t: "Reports", i: <FaListAlt size={16} /> }, { t: "Event Log", i: <FaHistory size={17} /> }, { t: "Recordings", i: <FaRegDotCircle size={17} /> },
  { t: "Backup", i: <FaArchive size={17} /> }, { t: "Integrations", i: <FaPuzzlePiece size={17} /> }, { t: "Advanced", i: <FaCog size={17} /> }, { t: "System", i: <FaWrench size={16} /> },
];

const railItems = [
  { t: "Team", i: <FaUserFriends size={17} /> }, { t: "Chat", i: <FaComments size={17} /> }, { t: "Meet", i: <MeetGlyph /> },
  { t: "Calls", i: <FaHistory size={16} /> }, { t: "Panel", i: <PanelGlyph c="#a9a9a9" /> }, { t: "Contacts", i: <ContactsGlyph /> },
  { t: "Voicemail", i: <FaEnvelope size={17} />, badge: "23" }, { t: "Settings", i: <FaWrench size={16} /> },
];

const chips = [
  ["3183248632", "Haven Home Health Monroe Main"], ["3183818243", "Haven Home Health Monroe Main 2"], ["3183744891", "Haven Home Health Monroe Main 3"],
  ["3184601565", "Haven Home Health Monroe Main 4"], ["3184601566", "Haven Home Health Monroe Main 5"], ["3184601567", "Haven Home Health Monroe Main 6"],
  ["3184601568", "Haven Home Health Monroe Main 7"], ["3184601569", "Haven Home Health Monroe Main 8"], ["3184601570", "Haven Home Health Monroe Main 9"],
  ["3184601571", "Haven Home Health Monroe Main 10"], ["8884283600", "Haven Home Health Main Toll Free"],
];

const bookmarks = ["ConnectWise", "Microsoft Apps", "Cybersecurity", "Tools", "Personnel"];

const Dropdown = ({ children }) => (
  <Select><span>{children}</span><Caret /></Select>
);

const Announcement = ({ mt }) => (
  <ToggleRow $mt={mt}><Toggle /><span>Play Announcement</span></ToggleRow>
);

export default function App() {
  return (
    <Page>
      <Global />
      <TabStrip>
        <TabListButton><ChevronDown size={15} /></TabListButton>
        <InactiveTab>
          <GroupLabel>Glue</GroupLabel>
          <TabFavicon viewBox="0 0 14 15"><GlueLogo /></TabFavicon>
          <TabTitle $gap={9}>3cx — IT Glue</TabTitle>
          <TabClose $right={3}><X size={12} /></TabClose>
        </InactiveTab>
        <ActiveTab>
          <svg width="12" height="17" viewBox="0 0 12 17"><path d="M0 0h6l6 8.500L6 17H0l5-8.500z" fill="#1a9be0" /></svg>
          <TabTitle $gap={8}>Admin Console - 3CX</TabTitle>
          <TabClose $right={10}><X size={12} /></TabClose>
        </ActiveTab>
        <NewTab><Plus size={18} strokeWidth={1.3} /></NewTab>
        <WindowControls>
          <WindowControl><Minus size={13} strokeWidth={1.5} /></WindowControl>
          <WindowControl><Copy size={11} strokeWidth={1.7} /></WindowControl>
          <WindowControl><X size={14} strokeWidth={1.5} /></WindowControl>
        </WindowControls>
      </TabStrip>

      <Toolbar>
        <ToolButton><ArrowLeft size={19} strokeWidth={1.4} /></ToolButton>
        <ToolButton><RotateCw size={15} strokeWidth={1.5} /></ToolButton>
        <ToolButton><House size={16} strokeWidth={1.4} /></ToolButton>
        <AddressBar>
          <AddressIcon><Lock size={13} strokeWidth={1.5} /></AddressIcon>
          <span>https://<Domain>havennursing.3cx.us</Domain>/#/office/call-handling/group/77</span>
          <AddressTools>
            <AddressTool><SplitGlyph /></AddressTool>
            <AddressTool><DotsCircle /></AddressTool>
            <ThinSep $h={16} $m={0} $c="#3f7256" />
            <AddressTool><Star size={17} strokeWidth={1.2} /></AddressTool>
          </AddressTools>
        </AddressBar>
        <ToolGroup>
          <ToolButton><svg width="16" height="16" viewBox="0 0 14 15"><GlueLogo /></svg></ToolButton>
          <ToolButton><Puzzle size={16} strokeWidth={1.4} /></ToolButton>
          <ThinSep $h={19} $m={2} $c="#5b8a6d" />
          <ToolButton><FavoritesGlyph /></ToolButton>
          <ToolButton><History size={16} strokeWidth={1.4} /></ToolButton>
          <ToolButton><DownloadGlyph /></ToolButton>
          <ToolButton><Avatar /></ToolButton>
          <ToolButton><Ellipsis size={17} /></ToolButton>
          <ChatPill><ChatGlyph />Chat</ChatPill>
        </ToolGroup>
      </Toolbar>

      <BookmarksBar>
        <svg width="15" height="13" viewBox="0 0 15 13" fill="none" stroke="#fff" strokeWidth="1.100"><rect x="1" y="1" width="13" height="9" rx="2.500" /><path d="M4 4.500h7M4 7h7M3 12h9" /></svg>
        <ThinSep $h={16} $m={14} $c="#4d8a66" />
        {bookmarks.map(b => <Bookmark key={b}><Folder />{b}</Bookmark>)}
        <Bookmark><TacoGlyph /><SmallFood />Taco Poker</Bookmark>
      </BookmarksBar>

      <AppWindow>
        <TopBar>
          <LogoMark><span>3</span>CX</LogoMark>
          <AppName>Admin Console</AppName>
          <TopIcons>
            <TopIcon $c="#fff"><FaPhoneAlt size={18} style={{ transform: "scaleX(-1)" }} /></TopIcon>
            <TopIcon><QrGlyph /></TopIcon>
            <TopIcon><BookOpenText size={19} strokeWidth={1.5} /></TopIcon>
            <UserBlock>A<Presence /></UserBlock>
          </TopIcons>
        </TopBar>
        <Body>
          <Rail>
            <RailHot>
              <RailHotItem><FaBell size={21} /></RailHotItem>
              <RailHotItem><SwirlGlyph /></RailHotItem>
            </RailHot>
            {railItems.map(r => (
              <RailItem key={r.t}>{r.i}{r.t}{r.badge && <RailBadge>{r.badge}</RailBadge>}</RailItem>
            ))}
            <RailSpacer />
            <RailItem $active><FaCog size={17} />Admin</RailItem>
            <RailItem><FaBoxOpen size={17} />Apps</RailItem>
          </Rail>
          <NavColumn>
            {navItems.map(n => (
              <NavRow key={n.t} $active={n.active}><NavIcon $c={n.c}>{n.i}</NavIcon>{n.t}</NavRow>
            ))}
          </NavColumn>
          <Main>
            <TitleRow>
              <BackArrow><BackGlyph /></BackArrow>
              <Title>Home Health Monroe (Live Chat - Text - Calls Menu)</Title>
              <SaveButton><FaSave size={9} />Save</SaveButton>
              <Help>Help<FaRegQuestionCircle size={16} /></Help>
            </TitleRow>
            <Form>
              <Tabs>
                <FormTab $active>General</FormTab>
                <FormTab>3CX Talk</FormTab>
              </Tabs>
              <DidLabel>Assigned DID number(s)</DidLabel>
              <DidBox>
                <ChipList>
                  {chips.map(([n, d]) => (
                    <Chip key={n}>
                      <ChipRemove><FaTimes size={7} /></ChipRemove>
                      <ChipText><b>{n}</b> {d}</ChipText>
                      <ChipEdit><FaPencilAlt size={10} /></ChipEdit>
                    </Chip>
                  ))}
                </ChipList>
                <DidActions><FaTimes size={10} /><Caret /></DidActions>
              </DidBox>
              <SectionTitle>Destinations</SectionTitle>
              <RouteGrid>
                <RouteGroup>
                  <FieldLabel>When office is open route to</FieldLabel>
                  <FieldStack $gap={7}>
                    <Dropdown>Ring Group</Dropdown>
                    <Dropdown>{"802  Haven Home Health Ring Group"}</Dropdown>
                  </FieldStack>
                  <Announcement mt={12} />
                </RouteGroup>
                <RouteGroup>
                  <FieldLabel>When office is closed route to</FieldLabel>
                  <FieldStack $gap={7}>
                    <Dropdown>Forward to Outside Number</Dropdown>
                    <TextInput>+13183295889</TextInput>
                  </FieldStack>
                  <Announcement mt={12} />
                </RouteGroup>
                <RouteGroup>
                  <FieldLabel $mb={3}>When on break route to</FieldLabel>
                  <FieldStack $gap={6}>
                    <Dropdown>Queue</Dropdown>
                    <Dropdown>{"800  Haven Home Health Monroe Front Desk"}</Dropdown>
                  </FieldStack>
                  <Announcement mt={13} />
                </RouteGroup>
                <RouteGroup>
                  <FieldLabel $mb={3}>When on holiday route to</FieldLabel>
                  <FieldStack $gap={6}>
                    <Dropdown>Forward to Outside Number</Dropdown>
                    <TextInput $focus><Selected>+13183295889</Selected></TextInput>
                  </FieldStack>
                  <Announcement mt={13} />
                </RouteGroup>
              </RouteGrid>
            </Form>
          </Main>
        </Body>
      </AppWindow>

      <Taskbar>
        <StartSlot><WinLogo /></StartSlot>
        <SearchPill><Search size={18} color="#222" strokeWidth={1.8} />Search</SearchPill>
        {taskbarItems.map(({ k, active, run }) => {
          const Glyph = TaskIcons[k];
          return (
            <TaskSlot key={k}>
              {active && <ActiveBack />}
              <Glyph />
              {(active || run) && <RunDot $active={active} />}
            </TaskSlot>
          );
        })}
        <Clock>5:11 PM<br />5/22/2026</Clock>
      </Taskbar>
    </Page>
  );
}
